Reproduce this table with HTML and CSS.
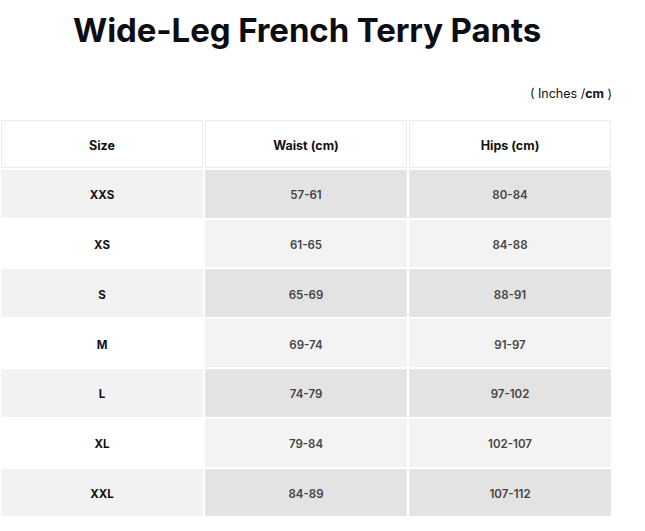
FILE: index.html
```html
<!DOCTYPE html>
<html>
<head>
<meta charset="utf-8">
<link rel="stylesheet" href="styles.css">
</head>
<body>
<div class="page">
  <h1 class="title">Wide-Leg French Terry Pants</h1>
  <div class="units">( Inches /<b>cm</b> )</div>
  <table class="chart">
    <thead>
      <tr><th>Size</th><th>Waist (cm)</th><th>Hips (cm)</th></tr>
    </thead>
    <tbody>
      <tr class="odd"><td class="sz">XXS</td><td>57-61</td><td>80-84</td></tr>
      <tr class="even"><td class="sz">XS</td><td>61-65</td><td>84-88</td></tr>
      <tr class="odd"><td class="sz">S</td><td>65-69</td><td>88-91</td></tr>
      <tr class="even"><td class="sz">M</td><td>69-74</td><td>91-97</td></tr>
      <tr class="odd"><td class="sz">L</td><td>74-79</td><td>97-102</td></tr>
      <tr class="even"><td class="sz">XL</td><td>79-84</td><td>102-107</td></tr>
      <tr class="odd"><td class="sz">XXL</td><td>84-89</td><td>107-112</td></tr>
    </tbody>
  </table>
</div>
</body>
</html>
```
FILE: styles.css
```css
html, body {
  margin: 0;
  padding: 0;
  background: #fff;
}
body {
  font-family: "Inter", "Liberation Sans", sans-serif;
  color: #111;
}
.page {
  width: 614px;
  padding-top: 10px;
}
.title {
  margin: 0 0 0 73px;
  font-size: 33px;
  font-weight: 700;
  line-height: 40px;
  color: #0d0d14;
  letter-spacing: -0.1px;
}
.units {
  text-align: right;
  font-size: 12.5px;
  line-height: 16px;
  margin-top: 36px;
  padding-right: 2px;
  color: #111;
}
.units b {
  font-weight: 700;
}
.chart {
  margin-top: 16px;
  margin-left: -1px;
  border-collapse: separate;
  border-spacing: 2px;
  width: 614px;
  table-layout: fixed;
}
.chart th, .chart td {
  height: 42.8px;
  padding: 3px 0 0;
  text-align: center;
  border: 1px solid #ececec;
  font-size: 12px;
}
.chart th {
  background: #fff;
  font-weight: 700;
  color: #111;
  font-size: 12.5px;
}
.chart td {
  font-weight: 600;
  color: #444;
  font-size: 11.5px;
}
.chart td.sz {
  color: #111;
  font-weight: 700;
}
.odd td { background: #e3e3e3; border-color: #e6e6e6; }
.odd td.sz { background: #f2f2f2; border-color: #f2f2f2; }
.even td { background: #f3f3f3; border-color: #f3f3f3; }
.even td.sz { background: #fff; border-color: #fff; }
```
